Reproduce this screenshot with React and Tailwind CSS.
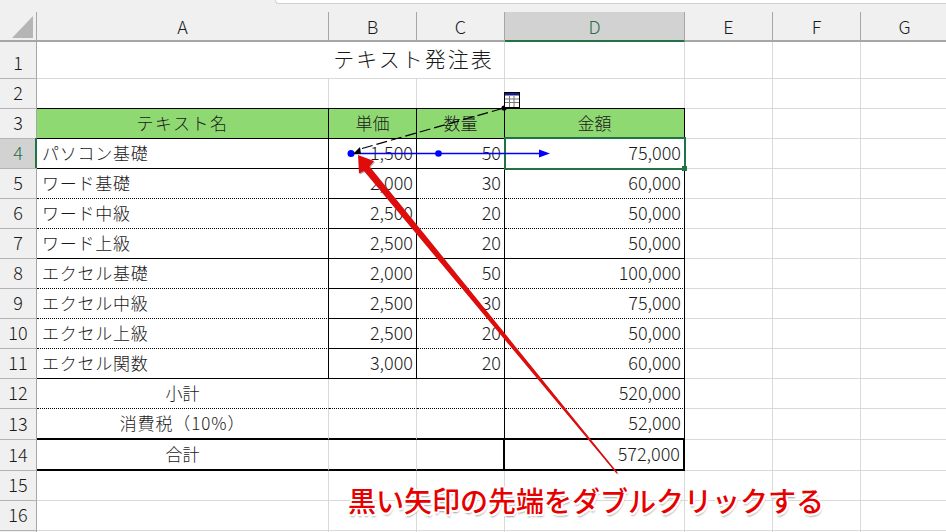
import React from "react";

const GRID = "border-r border-b border-r-[#d9d9d9] border-b-[#d9d9d9]";
const BLACK_R = "border-r border-r-black";
const SOLID = "border-b border-b-black";
const DOTTED = "border-b [border-bottom-style:dotted] border-b-black";
const TEXT_R = "flex items-center justify-end pr-[3px] pb-[2px] text-[18px]";
const TEXT_L = "flex items-center pl-[5px] pb-[2px] tracking-[0.75px]";
const TEXT_C = "flex items-center justify-center pb-[2px]";

// 品目の行 4〜11
const items = [
    { row: 4, name: "パソコン基礎", price: "1,500", qty: "50", total: "75,000", end: true },
    { row: 5, name: "ワード基礎", price: "2,000", qty: "30", total: "60,000" },
    { row: 6, name: "ワード中級", price: "2,500", qty: "20", total: "50,000" },
    { row: 7, name: "ワード上級", price: "2,500", qty: "20", total: "50,000", end: true },
    { row: 8, name: "エクセル基礎", price: "2,000", qty: "50", total: "100,000" },
    { row: 9, name: "エクセル中級", price: "2,500", qty: "30", total: "75,000" },
    { row: 10, name: "エクセル上級", price: "2,500", qty: "20", total: "50,000" },
    { row: 11, name: "エクセル関数", price: "3,000", qty: "20", total: "60,000", end: true },
];

const RowHead = ({ n, active, className = "pb-[2px]" }) => (
    <div className={`flex items-center justify-center text-[18px] border-r border-b border-r-[#a6a6a6] border-b-[#b4b4b4] ${className} ${active ? "bg-[#d2d2d2] text-[#1f6f4a]" : "bg-[#f0f0f0]"}`}>
        {n}
    </div>
);

const ColHead = ({ label, active }) => (
    <div className={`flex items-center justify-center text-[18px] ${active ? "bg-[#d2d2d2] text-[#1f6f4a] border-b-2 border-b-[#217346] border-r border-r-[#a6a6a6]" : "bg-[#f0f0f0] border-r border-r-[#a6a6a6] border-b-2 border-b-[#a6a6a6]"}`}>
        {label}
    </div>
);

const Blank = ({ className = GRID }) => <div className={className}></div>;

const Trailing = () => (
    <>
        <Blank />
        <Blank />
        <Blank />
    </>
);

export default function App() {
    return (
        <div className="relative w-[946px] h-[532px] overflow-hidden bg-white text-[17px] font-light text-[#1a1a1a] font-['Noto_Sans_CJK_JP','Noto_Sans',sans-serif]">
            {/* 数式バーの下端 */}
            <div className="flex h-[12px] bg-[#f0f0f0]">
                <div className="w-[275px] h-[3px]"></div>
                <div className="flex-1 h-[4px] bg-white border-l border-b border-[#d0d0d0] rounded-bl-[4px]"></div>
            </div>

            <div className="grid grid-cols-[37px_292px_88px_88px_180px_88px_88px_88px] grid-rows-[30px_37px_30px_30px_30px_30px_30px_30px_30px_30px_30px_30px_30px_31px_31px_30px_30px_30px]">
                <div className="relative bg-[#f0f0f0] border-r border-b-2 border-r-[#a6a6a6] border-b-[#a6a6a6]">
                    <svg className="absolute left-0 top-0" width="36" height="29" viewBox="0 0 36 29">
                        <polygon points="33,4 33,26 12,26" fill="#b5b5b5" />
                    </svg>
                </div>
                <ColHead label="A" />
                <ColHead label="B" />
                <ColHead label="C" />
                <ColHead label="D" active />
                <ColHead label="E" />
                <ColHead label="F" />
                <ColHead label="G" />

                {/* 1: タイトル */}
                <RowHead n={1} className="pt-[5px]" />
                <div className={`col-span-3 ${GRID} ${TEXT_C} pl-[286px] text-[21px] tracking-[2px]`}>テキスト発注表</div>
                <Blank />
                <Trailing />

                <RowHead n={2} />
                <Blank />
                <Blank />
                <Blank />
                <Blank />
                <Trailing />

                {/* 3: 見出し */}
                <RowHead n={3} />
                <div className={`bg-[#8fd973] border-t border-t-black -mt-px ${BLACK_R} ${SOLID} ${TEXT_C} tracking-[1.5px]`}>テキスト名</div>
                <div className={`bg-[#8fd973] border-t border-t-black -mt-px ${BLACK_R} ${SOLID} ${TEXT_C}`}>単価</div>
                <div className={`bg-[#8fd973] border-t border-t-black -mt-px ${BLACK_R} ${SOLID} ${TEXT_C}`}>数量</div>
                <div className={`bg-[#8fd973] border-t border-t-black -mt-px ${BLACK_R} ${SOLID} ${TEXT_C}`}>金額</div>
                <Trailing />

                {items.map((item) => (
                    <React.Fragment key={item.row}>
                        <RowHead n={item.row} active={item.row === 4} />
                        <div className={`${BLACK_R} ${item.end ? SOLID : DOTTED} ${TEXT_L}`}>{item.name}</div>
                        <div className={`${BLACK_R} ${SOLID} ${TEXT_R}`}>{item.price}</div>
                        <div className={`${BLACK_R} ${item.end ? SOLID : DOTTED} ${TEXT_R}`}>{item.qty}</div>
                        <div className={`${BLACK_R} ${item.end ? SOLID : DOTTED} ${TEXT_R}`}>{item.total}</div>
                        <Trailing />
                    </React.Fragment>
                ))}

                <RowHead n={12} />
                <div className={`border-r border-r-[#d9d9d9] ${DOTTED} ${TEXT_C}`}>小計</div>
                <Blank className={`border-r border-r-[#d9d9d9] ${DOTTED}`} />
                <Blank className={`${BLACK_R} ${DOTTED}`} />
                <div className={`${BLACK_R} ${DOTTED} ${TEXT_R}`}>520,000</div>
                <Trailing />

                <RowHead n={13} />
                <div className={`border-r border-r-[#d9d9d9] border-b-2 border-b-black ${TEXT_C} tracking-[0.9px]`}>消費税（10%）</div>
                <Blank className="border-r border-r-[#d9d9d9] border-b-2 border-b-black" />
                <Blank className={`${BLACK_R} border-b-2 border-b-black`} />
                <div className={`${BLACK_R} border-b-2 border-b-black ${TEXT_R}`}>52,000</div>
                <Trailing />

                <RowHead n={14} />
                <div className={`border-r border-r-[#d9d9d9] border-b-2 border-b-black ${TEXT_C}`}>合計</div>
                <Blank className="border-r border-r-[#d9d9d9] border-b-2 border-b-black" />
                <Blank className="border-r-2 border-r-black border-b-2 border-b-black" />
                <div className={`border-r-2 border-r-black border-b-2 border-b-black ${TEXT_R}`}>572,000</div>
                <Trailing />

                {[15, 16, ""].map((n) => (
                    <React.Fragment key={n}>
                        <RowHead n={n} />
                        <Blank />
                        <Blank />
                        <Blank />
                        <Blank />
                        <Trailing />
                    </React.Fragment>
                ))}
            </div>

            {/* 選択セル D4 */}
            <div className="absolute left-[504px] top-[137px] w-[182px] h-[33px] border-2 border-[#217346]"></div>
            <div className="absolute left-[682px] top-[166px] w-[5px] h-[5px] bg-[#217346]"></div>
            <div className="absolute left-[35px] top-[138px] w-[2px] h-[30px] bg-[#217346]"></div>

            {/* トレース矢印 */}
            <svg className="absolute left-0 top-0 pointer-events-none" width="946" height="532" viewBox="0 0 946 532">
                <line x1="351" y1="153.5" x2="541" y2="153.5" stroke="#0000ff" strokeWidth="1.5" />
                <circle cx="351" cy="153.5" r="3.5" fill="#0000ff" />
                <circle cx="438.5" cy="153.5" r="3.3" fill="#0000ff" />
                <polygon points="539,149.5 550,153.5 539,157.5" fill="#0000ff" />

                <line x1="362" y1="148.5" x2="504" y2="108" stroke="#000" strokeWidth="1.2" strokeDasharray="11 4" />
                <circle cx="504" cy="108" r="2.6" fill="#000" />
                <polygon points="353,154 360,147 361,154" fill="#000" />

                <g>
                    <rect x="504.5" y="92.5" width="15" height="15" fill="#fff" stroke="#000" />
                    <rect x="505" y="93" width="14" height="2.5" fill="#1a1a8c" />
                    <path d="M505 99h14M505 102.5h14M509.5 96v11M514 96v11" stroke="#777" strokeWidth="1" />
                </g>

                {/* 赤い矢印 */}
                <polygon points="359,156 375,162 370.5,167.5 618.5,474 617.5,474.5 365,172 360,174.5" fill="#8c8c8c" opacity="0.7" />
                <polygon points="358,155 374,161 369.5,166.5 617.5,472.5 616.5,473.5 364,171 359,173.5" fill="#e00b0b" />
            </svg>

            {/* 説明文 */}
            <div className="absolute left-[348px] top-[480px] whitespace-nowrap text-[28px] leading-[40px] font-medium text-[#e60000] [text-shadow:2px_0_0_#fff,-2px_0_0_#fff,0_2px_0_#fff,0_-2px_0_#fff,1.5px_1.5px_0_#fff,-1.5px_1.5px_0_#fff,1.5px_-1.5px_0_#fff,-1.5px_-1.5px_0_#fff,1px_3px_2px_#9a9a9a]">
                黒い矢印の先端をダブルクリックする
            </div>
        </div>
    );
}
